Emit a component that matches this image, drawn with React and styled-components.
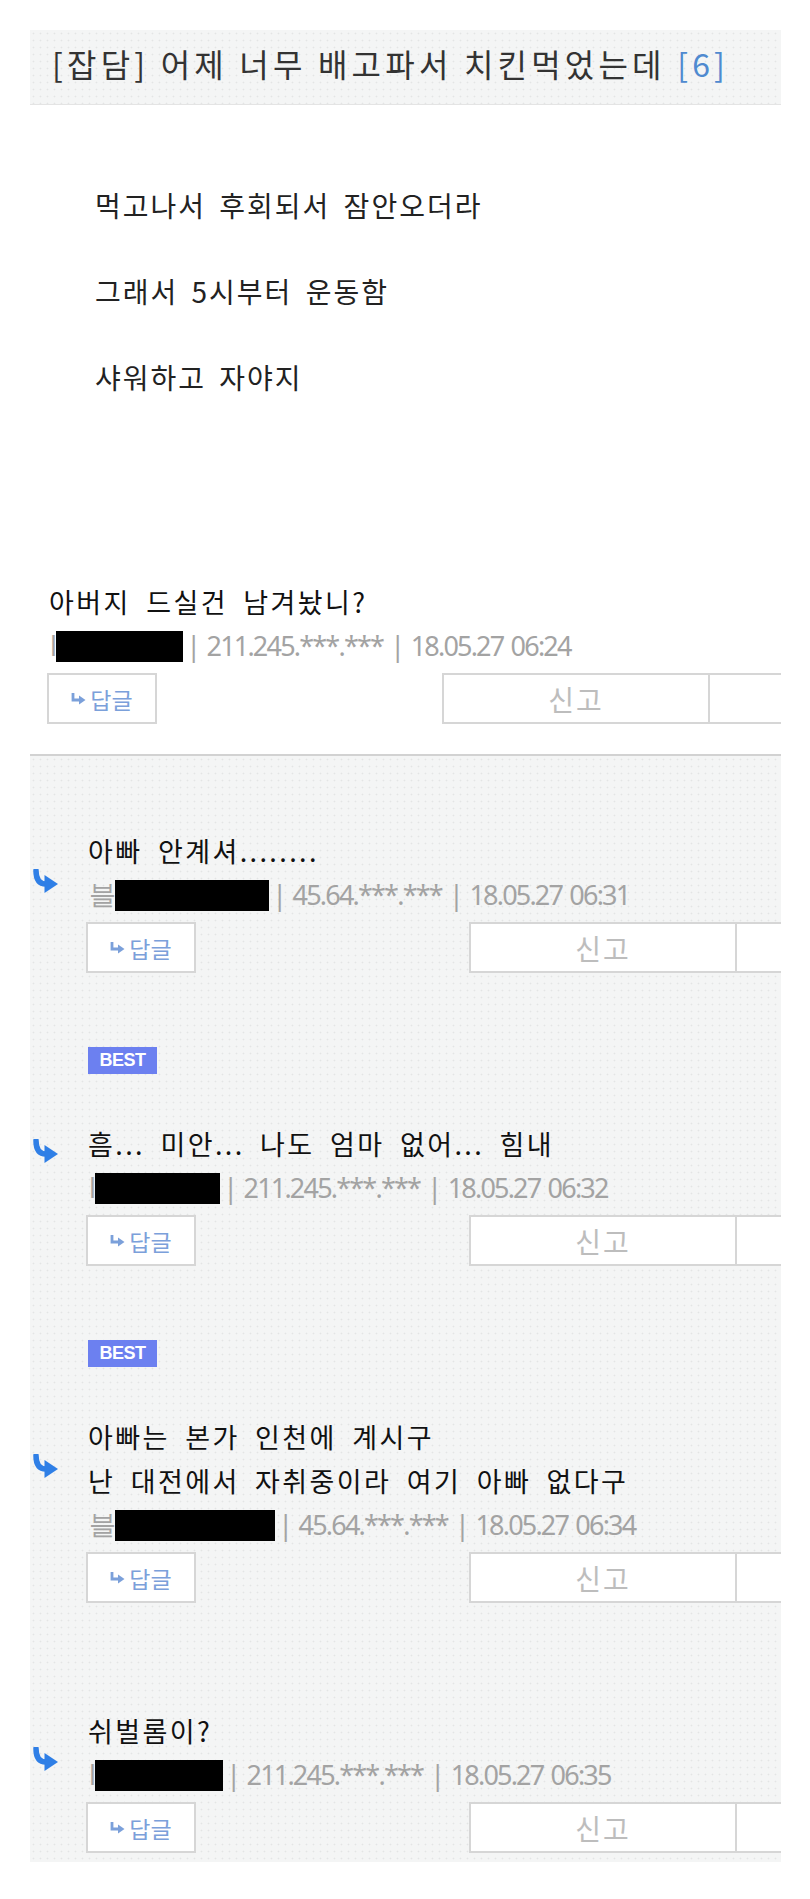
import React from "react";
import styled, { createGlobalStyle } from "styled-components";

const GlobalStyle = createGlobalStyle`
  body {
    margin: 0;
    background: #ffffff;
    font-family: "Noto Sans CJK KR", "Noto Sans", sans-serif;
  }
`;

// 점박이 회색 배경
const dotted = `
  background-color: #f4f5f5;
  background-image: radial-gradient(circle, #e3e5e5 0.8px, transparent 1.1px);
  background-size: 7px 7px;
`;

const Page = styled.div`
  width: 751px;
  margin: 30px 0 0 30px;
  overflow: hidden;
`;

const TitleBar = styled.div`
  ${dotted}
  height: 75px;
  box-sizing: border-box;
  padding: 0 0 8px 22px;
  border-bottom: 1px solid #e4e4e4;
  display: flex;
  align-items: center;
  font-size: 32px;
  letter-spacing: 4.2px;
  color: #333333;
  white-space: nowrap;
`;

const Count = styled.span`
  color: #4f8ad0;
`;

const Body = styled.div`
  padding: 80px 0 0 65px;
`;

const Line = styled.p`
  margin: 0;
  font-size: 28px;
  line-height: 40px;
  letter-spacing: 2px;
  word-spacing: 5px;
  color: #222222;
  & + & {
    margin-top: 46px;
  }
`;

const TopComment = styled.div`
  padding: 183px 0 30px 17px;
`;

const Replies = styled.div`
  ${dotted}
  border-top: 2px solid #d2d2d2;
  padding-bottom: 9px;
`;

const ReplyBlock = styled.div`
  padding: ${(props) => props.$top}px 0 0 2px;
`;

const Badge = styled.div`
  width: 69px;
  height: 27px;
  margin: 0 0 48px 56px;
  background: #6c80f0;
  color: #ffffff;
  font-family: "Liberation Sans", sans-serif;
  font-weight: bold;
  font-size: 18px;
  letter-spacing: -0.5px;
  display: flex;
  align-items: center;
  justify-content: center;
`;

const ReplyRow = styled.div`
  display: flex;
`;

const ArrowCol = styled.div`
  width: 54px;
  flex-shrink: 0;
  padding-top: ${(props) => props.$top}px;
`;

const Content = styled.div`
  flex: 1;
`;

const Text = styled.div`
  padding-left: 2px;
  font-size: 27px;
  line-height: 44px;
  letter-spacing: 2.4px;
  word-spacing: 7px;
  color: #111111;
  white-space: pre-line;
`;

const Meta = styled.div`
  display: flex;
  align-items: center;
  height: 42px;
  padding-left: 3px;
  font-family: "Noto Sans", sans-serif;
  font-size: 27px;
  letter-spacing: -1.8px;
  word-spacing: 2px;
  color: #a3a3a3;
  white-space: nowrap;
`;

const Redact = styled.span`
  display: inline-block;
  width: ${(props) => props.$w}px;
  height: 31px;
  margin: 2px 3px 0 1px;
  background: #000000;
`;

const Actions = styled.div`
  display: flex;
  margin-top: 7px;
`;

const ReplyButton = styled.button`
  width: 110px;
  height: 51px;
  flex-shrink: 0;
  padding: 0;
  border: 2px solid #d6d6d6;
  background: #ffffff;
  color: #7ba0da;
  font-family: inherit;
  font-size: 23px;
  display: flex;
  align-items: center;
  justify-content: center;
  gap: 4px;
`;

const ActionGroup = styled.div`
  display: flex;
  flex-shrink: 0;
  margin-left: ${(props) => props.$gap}px;
`;

const ActionButton = styled.button`
  width: 268px;
  height: 51px;
  flex-shrink: 0;
  padding: 0;
  border: 2px solid #d6d6d6;
  background: #ffffff;
  color: #bdbdbd;
  font-family: inherit;
  font-size: 28px;
  letter-spacing: 2px;
  & + & {
    border-left: none;
  }
`;

const ReplyArrow = () => (
  <svg width="27" height="25" viewBox="0 0 27 25">
    <path d="M4 1.5 C4 11 8 15 14 15" stroke="#2f7fe6" strokeWidth="5.5" fill="none" strokeLinecap="round" />
    <path d="M12.5 6 L26 15 L12.5 24 Z" fill="#2f7fe6" />
  </svg>
);

const SmallArrow = () => (
  <svg width="15" height="12" viewBox="0 0 15 12">
    <path d="M2 0 V7 H9" stroke="#7ba0da" strokeWidth="2.8" fill="none" />
    <path d="M8 2.5 L14.5 7 L8 11.5 Z" fill="#7ba0da" />
  </svg>
);

const CommentBody = ({ text, nick, box, ip, date, gap }) => (
  <>
    <Text>{text}</Text>
    <Meta>
      {nick}
      <Redact $w={box} />| {ip} | {date}
    </Meta>
    <Actions>
      <ReplyButton>
        <SmallArrow />
        답글
      </ReplyButton>
      <ActionGroup $gap={gap}>
        <ActionButton>신고</ActionButton>
        <ActionButton />
      </ActionGroup>
    </Actions>
  </>
);

const replies = [
  { top: 73, arrow: 40, text: "아빠 안계셔........", nick: "블", box: 154, ip: "45.64.***.***", date: "18.05.27 06:31" },
  { top: 74, arrow: 17, best: true, text: "흠... 미안... 나도 엄마 없어... 힘내", nick: "l", box: 125, ip: "211.245.***.***", date: "18.05.27 06:32" },
  { top: 74, arrow: 39, best: true, text: "아빠는 본가 인천에 계시구\n난 대전에서 자취중이라 여기 아빠 없다구", nick: "블", box: 160, ip: "45.64.***.***", date: "18.05.27 06:34" },
  { top: 106, arrow: 38, text: "쉬벌롬이?", nick: "l", box: 128, ip: "211.245.***.***", date: "18.05.27 06:35" },
];

const App = () => {
  return (
    <Page>
      <GlobalStyle />
      <TitleBar>
        [잡담] 어제 너무 배고파서 치킨먹었는데&nbsp;<Count>[6]</Count>
      </TitleBar>
      <Body>
        <Line>먹고나서 후회되서 잠안오더라</Line>
        <Line>그래서 5시부터 운동함</Line>
        <Line>샤워하고 자야지</Line>
      </Body>
      <TopComment>
        <CommentBody
          text="아버지 드실건 남겨놨니?"
          nick="l"
          box={127}
          ip="211.245.***.***"
          date="18.05.27 06:24"
          gap={285}
        />
      </TopComment>
      <Replies>
        {replies.map((r, i) => (
          <ReplyBlock key={i} $top={r.top}>
            {r.best && <Badge>BEST</Badge>}
            <ReplyRow>
              <ArrowCol $top={r.arrow}>
                <ReplyArrow />
              </ArrowCol>
              <Content>
                <CommentBody {...r} gap={273} />
              </Content>
            </ReplyRow>
          </ReplyBlock>
        ))}
      </Replies>
    </Page>
  );
};

export default App;
